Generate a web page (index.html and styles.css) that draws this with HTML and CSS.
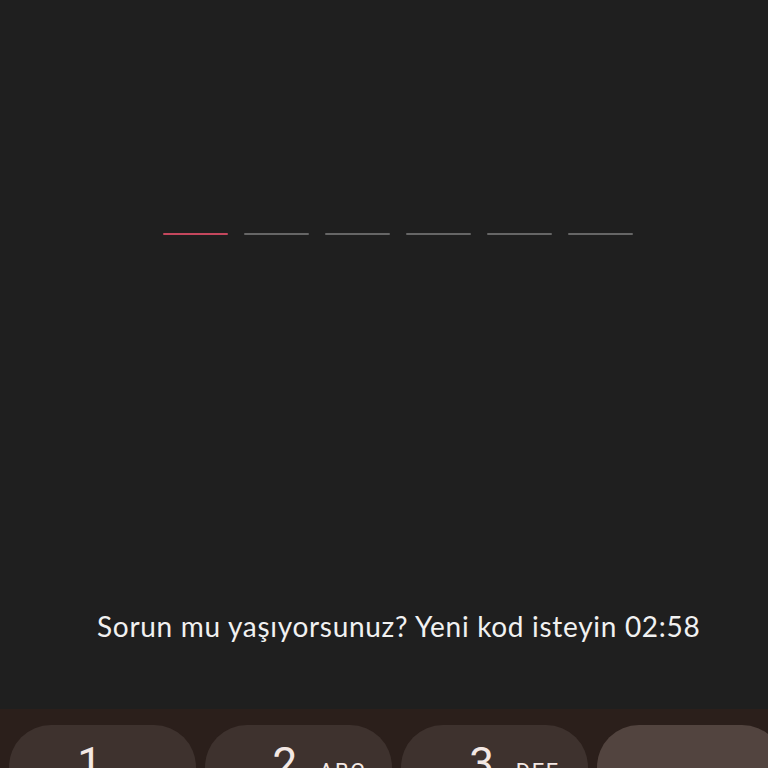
FILE: index.html
```html
<!DOCTYPE html>
<html lang="tr">
<head>
<meta charset="utf-8">
<link rel="stylesheet" href="styles.css">
</head>
<body>
<div class="screen">
  <div class="code">
    <span class="dash active"></span>
    <span class="dash"></span>
    <span class="dash"></span>
    <span class="dash"></span>
    <span class="dash"></span>
    <span class="dash"></span>
  </div>
  <p class="help">Sorun mu yaşıyorsunuz? Yeni kod isteyin 02:58</p>
  <div class="keyboard">
    <div class="key"><span class="digit">1</span><span class="letters"></span></div>
    <div class="key"><span class="digit">2</span><span class="letters">ABC</span></div>
    <div class="key"><span class="digit">3</span><span class="letters">DEF</span></div>
    <div class="key key-alt"></div>
  </div>
</div>
</body>
</html>
```
FILE: styles.css
```css
html, body {
  margin: 0;
  padding: 0;
  background: #1f1f1f;
  overflow: hidden;
}
.screen {
  width: 768px;
  height: 768px;
  display: flex;
  flex-direction: column;
  overflow: hidden;
}
.code {
  display: flex;
  gap: 16px;
  padding: 233px 0 0 163px;
}
.dash {
  display: block;
  width: 65px;
  height: 2px;
  border-radius: 1px;
  background: #666666;
}
.dash.active {
  background: #c4475d;
}
.help {
  margin: 375px 0 0 0;
  padding-left: 97px;
  font-family: Lato, "Noto Sans", sans-serif;
  font-size: 28px;
  letter-spacing: 0.7px;
  line-height: 32px;
  color: #f1f1f1;
  white-space: nowrap;
}
.keyboard {
  margin-top: auto;
  height: 59px;
  background: #2b1f1b;
  display: grid;
  grid-template-columns: repeat(4, 187px);
  column-gap: 9px;
  padding: 16px 0 0 9px;
  box-sizing: border-box;
}
.key {
  height: 90px;
  border-radius: 42px;
  background: #3e322e;
  display: grid;
  grid-template-columns: 1fr auto 1fr;
  align-items: baseline;
  padding: 17px 26px 0 0;
  box-sizing: border-box;
  color: #f3e8e4;
  font-family: Roboto, "Noto Sans", sans-serif;
}
.key-alt {
  background: #52443f;
}
.digit {
  grid-column: 2;
  font-size: 44px;
  line-height: 44px;
}
.letters {
  grid-column: 3;
  justify-self: start;
  padding-left: 22px;
  font-size: 22px;
  letter-spacing: 1.5px;
}
```
